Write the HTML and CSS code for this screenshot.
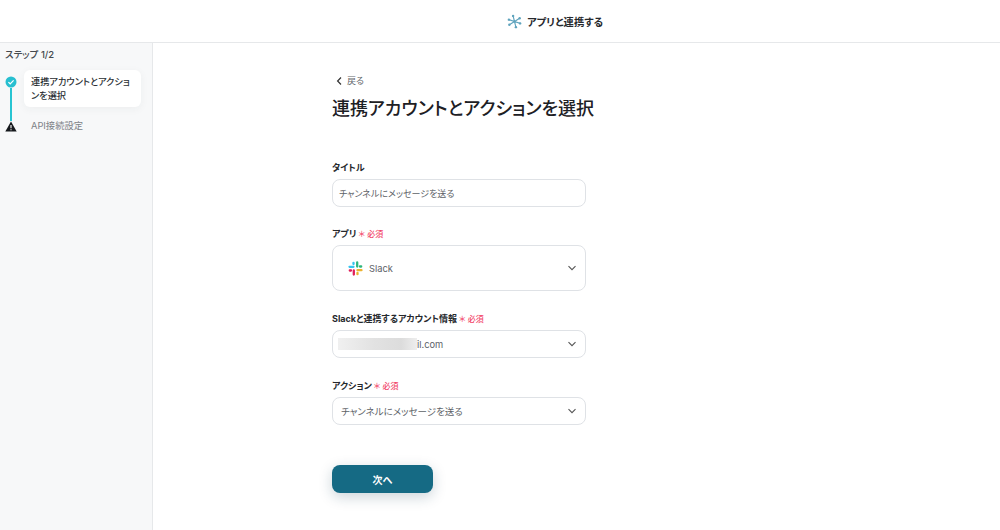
FILE: index.html
```
<!DOCTYPE html>
<html lang="ja">
<head>
<meta charset="utf-8">
<title>アプリと連携する</title>
<link rel="stylesheet" href="styles.css">
</head>
<body>
<header class="topbar">
  <svg class="logo" width="15" height="15" viewBox="0 0 16 16" fill="none" stroke="#5fa3bd" stroke-width="1.200" stroke-linecap="round">
    <path d="M8 8L6.500 2M8 8l5.500-3.500M8 8l6 2M8 8l1.500 6M8 8l-5.500 3.500M8 8L2 6"/>
    <g fill="#5fa3bd" stroke="none"><circle cx="6.500" cy="2" r="1.300"/><circle cx="13.500" cy="4.500" r="1.300"/><circle cx="14" cy="10" r="1.300"/><circle cx="9.500" cy="14" r="1.300"/><circle cx="2.500" cy="11.500" r="1.300"/><circle cx="2" cy="6" r="1.300"/></g>
  </svg>
  <span class="topbar-title">アプリと連携する</span>
</header>
<div class="layout">
  <aside class="sidebar">
    <div class="step-count">ステップ 1/2</div>
    <div class="steps">
      <div class="rail">
        <svg width="12" height="12" viewBox="0 0 12 12"><circle cx="6" cy="6" r="5.500" fill="#27bfd0"/><path d="M3.400 6.100l1.800 1.700 3.400-3.400" fill="none" stroke="#fff" stroke-width="1.200"/></svg>
        <span class="rail-line"></span>
        <svg width="12" height="11" viewBox="0 0 12 11"><path d="M6 .5L11.700 10.500H.3z" fill="#15181c"/><path d="M6 4v3.200M6 8.200v1" stroke="#fff" stroke-width="1.100"/></svg>
      </div>
      <div class="step-list">
        <div class="step-card">連携アカウントとアクションを選択</div>
        <div class="step-next">API接続設定</div>
      </div>
    </div>
  </aside>
  <main class="main">
    <div class="content">
      <div class="back">
        <svg width="8" height="10" viewBox="0 0 8 10" fill="none" stroke="#333" stroke-width="1.200"><path d="M6 1.500L2.600 5 6 8.500"/></svg>
        <span>戻る</span>
      </div>
      <h1 class="title">連携アカウントとアクションを選択</h1>
      <div class="field first">
        <div class="label">タイトル</div>
        <div class="box compact"><span class="value small">チャンネルにメッセージを送る</span></div>
      </div>
      <div class="field">
        <div class="label">アプリ<span class="req">＊ 必須</span></div>
        <div class="box tall">
          <svg class="slack" width="15" height="15" viewBox="0 0 15 15" stroke-width="2.300" stroke-linecap="round" fill="none">
            <g stroke="#36c5f0"><path d="M1.500 5.800H5.500M5.500 1.800V3"/></g>
            <g stroke="#2eb67d"><path d="M9.200 1.500V5.500M13.200 5.500H12"/></g>
            <g stroke="#ecb22e"><path d="M9.500 9.200H13.500M9.500 13.200V12"/></g>
            <g stroke="#e01e5a"><path d="M5.800 9.500V13.500M1.800 9.500H3"/></g>
          </svg>
          <span class="value">Slack</span>
          <svg class="chev" width="10" height="6" viewBox="0 0 10 6" fill="none" stroke="#555" stroke-width="1.100"><path d="M1.500 1.200L5 4.700l3.500-3.500"/></svg>
        </div>
      </div>
      <div class="field wide-gap">
        <div class="label">Slackと連携するアカウント情報<span class="req">＊ 必須</span></div>
        <div class="box mail">
          <span class="blur"></span><span class="value">il.com</span>
          <svg class="chev" width="10" height="6" viewBox="0 0 10 6" fill="none" stroke="#555" stroke-width="1.100"><path d="M1.500 1.200L5 4.700l3.500-3.500"/></svg>
        </div>
      </div>
      <div class="field wide-gap">
        <div class="label">アクション<span class="req">＊ 必須</span></div>
        <div class="box action">
          <span class="value large">チャンネルにメッセージを送る</span>
          <svg class="chev" width="10" height="6" viewBox="0 0 10 6" fill="none" stroke="#555" stroke-width="1.100"><path d="M1.500 1.200L5 4.700l3.500-3.500"/></svg>
        </div>
      </div>
      <button class="next" type="button">次へ</button>
    </div>
  </main>
</div>
</body>
</html>
```
FILE: styles.css
```
* { box-sizing: border-box; }
html, body { margin: 0; height: 100%; }
body {
  width: 1000px;
  height: 530px;
  overflow: hidden;
  background: #fff;
  font-family: Inter, "Noto Sans CJK JP", sans-serif;
  font-feature-settings: "palt";
  color: #2b2f33;
  display: flex;
  flex-direction: column;
}
.topbar {
  height: 43px;
  flex: none;
  display: flex;
  align-items: center;
  justify-content: center;
  gap: 5px;
  border-bottom: 1px solid #e6e8ea;
  padding-left: 110px;
}
.topbar-title { font-size: 10.300px; font-weight: 700; color: #26292d; }
.layout { flex: 1; display: flex; min-height: 0; }
.sidebar {
  width: 153px;
  flex: none;
  background: #f7f8f9;
  border-right: 1px solid #e6e8ea;
  padding: 6px 11px 0 5px;
}
.step-count { font-size: 9.500px; font-weight: 500; line-height: 12px; color: #44494e; margin-bottom: 9px; }
.steps { display: flex; gap: 7px; }
.rail { width: 12px; display: flex; flex-direction: column; align-items: center; padding-top: 6px; }
.rail-line { width: 2px; height: 33px; background: #27c4d2; }
.step-list { flex: 1; }
.step-card {
  background: #fff;
  border-radius: 6px;
  padding: 5px 7px;
  font-size: 9.200px;
  font-weight: 500;
  line-height: 14px;
  height: 37px;
  color: #2b2f33;
  box-shadow: 0 2px 8px rgba(40, 50, 60, .05);
}
.step-next { font-size: 9.300px; line-height: 13px; color: #7d8287; padding: 12px 7px 0; }
.main { flex: 1; padding: 32px 0 0 179px; }
.content { width: 254px; }
.back { display: flex; align-items: center; gap: 4px; font-size: 9px; line-height: 12px; color: #63686d; padding-left: 3px; }
.title { margin: 7px 0 0; font-size: 18px; font-weight: 500; line-height: 30px; color: #1d2024; white-space: nowrap; }
.field { margin-top: 20px; }
.field.first { margin-top: 37px; }
.field.wide-gap { margin-top: 21px; }
.label { font-size: 9px; font-weight: 700; height: 14px; line-height: 14px; color: #26292d; margin-bottom: 4px; }
.req { font-size: 8px; font-weight: 500; color: #f2466a; margin-left: 2px; }
.box {
  height: 28px;
  border: 1px solid #dfe2e6;
  border-radius: 8px;
  display: flex;
  align-items: center;
  padding: 0 8px 0 9px;
  background: #fff;
}
.box.compact { padding-left: 6px; }
.box.action { padding-left: 8px; }
.box.tall { height: 46px; padding-left: 15px; }
.box.mail { padding-left: 5px; }
.value { font-size: 9.300px; color: #5d6267; }
.value.small { font-size: 9px; }
.value.large { font-size: 9.500px; }
.slack { margin-right: 6px; }
.blur { width: 79px; height: 12px; background: linear-gradient(90deg, #f0f0f0, #e2e2e2 45%, #dcdcdc 80%, #eeeeee); }
.chev { margin-left: auto; }
.next {
  display: block;
  margin-top: 40px;
  width: 101px;
  height: 28px;
  border: 0;
  border-radius: 8px;
  background: #156a84;
  color: #fff;
  font: 700 10px Inter, "Noto Sans CJK JP", sans-serif;
  box-shadow: 0 4px 14px rgba(20, 60, 80, .22);
}
```
